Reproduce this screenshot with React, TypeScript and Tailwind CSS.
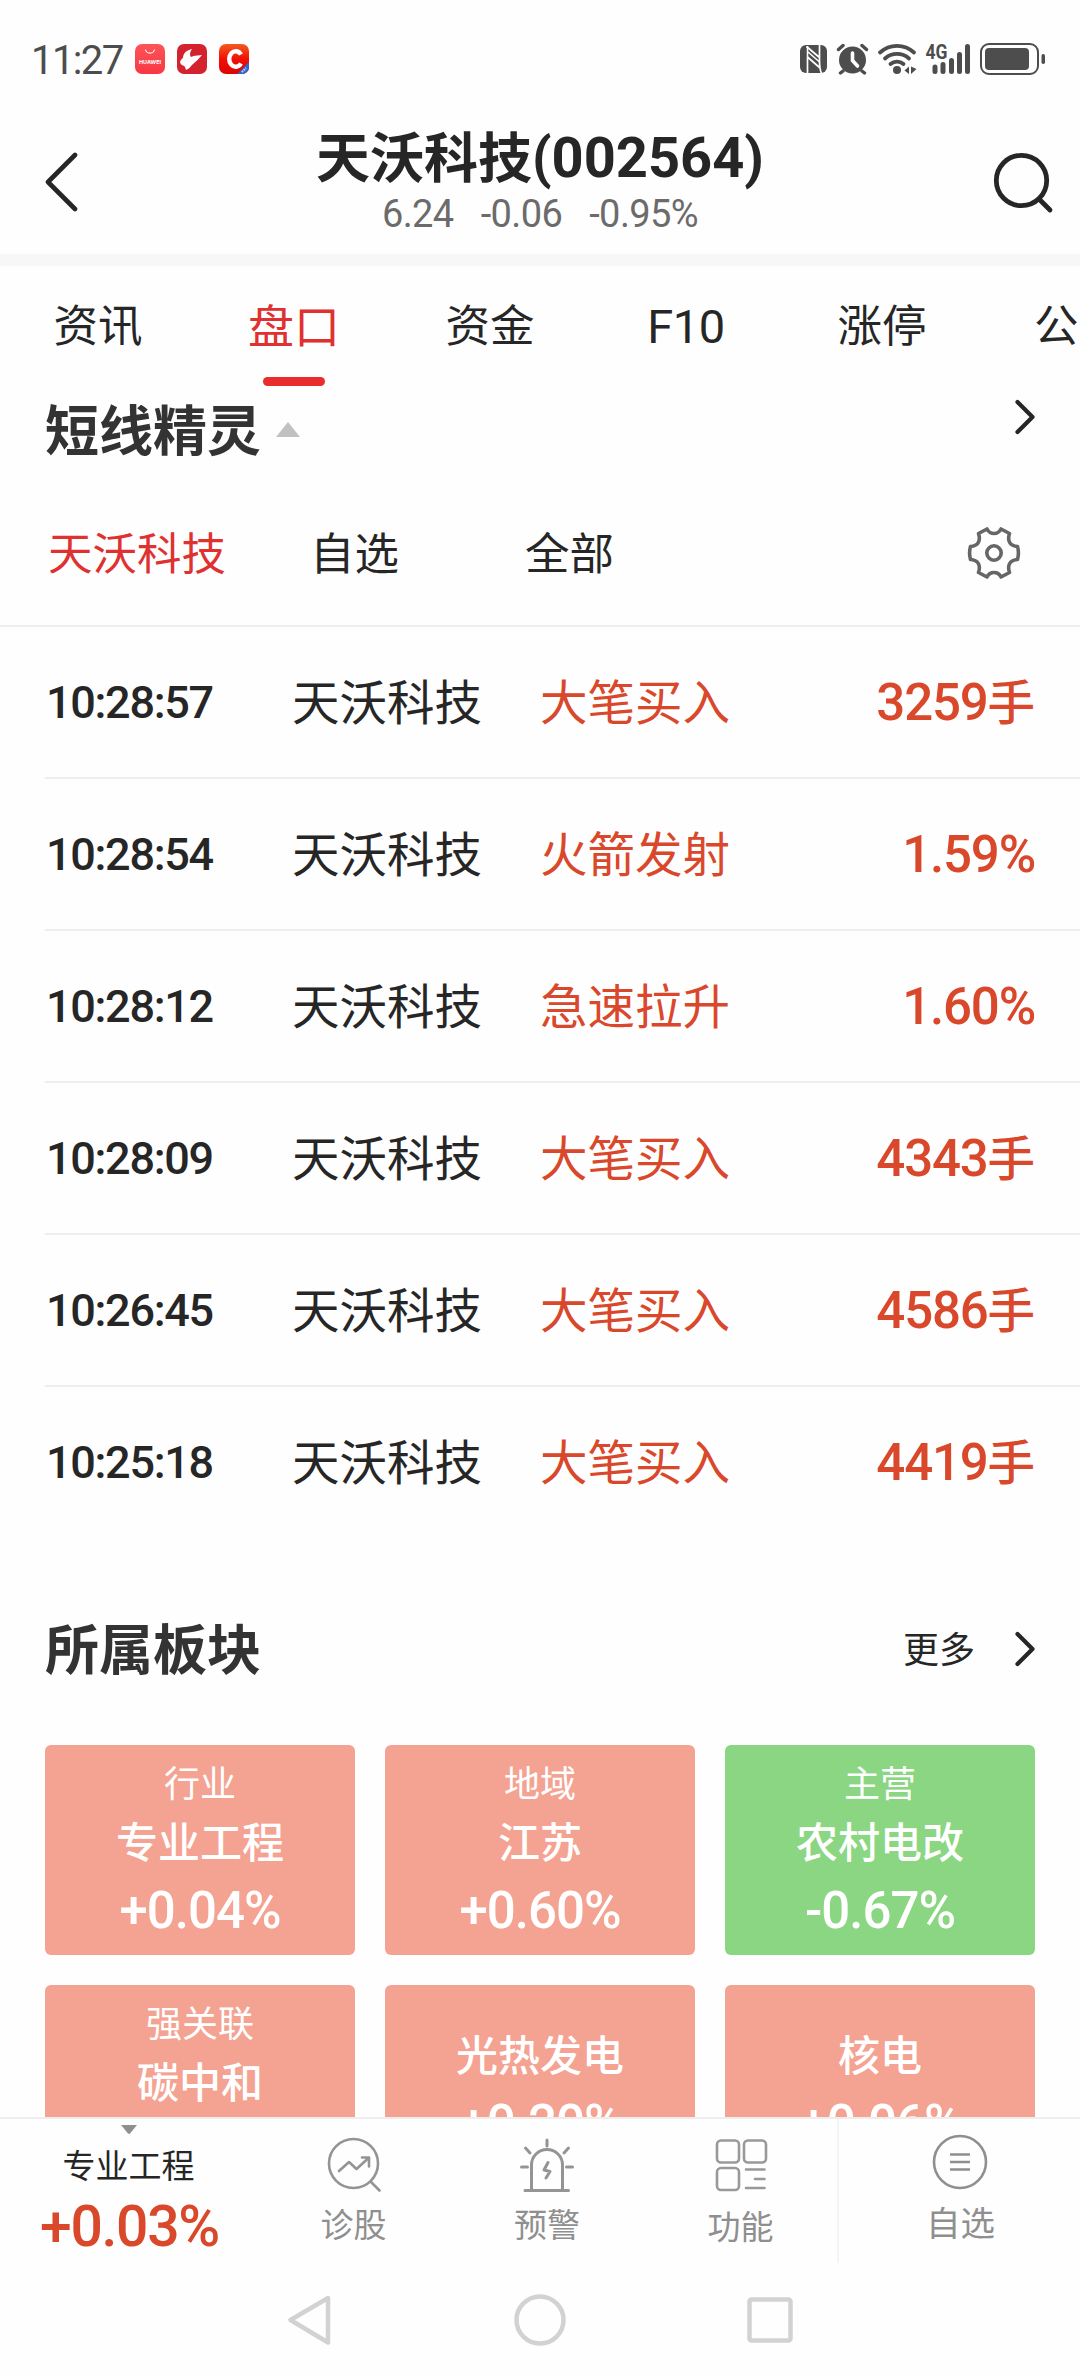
import React from 'react'
import clsx from 'clsx'

const tabs = ['资讯', '盘口', '资金', 'F10', '涨停']

const alerts = [
  { time: '10:28:57', name: '天沃科技', type: '大笔买入', value: '3259', unit: '手' },
  { time: '10:28:54', name: '天沃科技', type: '火箭发射', value: '1.59%' },
  { time: '10:28:12', name: '天沃科技', type: '急速拉升', value: '1.60%' },
  { time: '10:28:09', name: '天沃科技', type: '大笔买入', value: '4343', unit: '手' },
  { time: '10:26:45', name: '天沃科技', type: '大笔买入', value: '4586', unit: '手' },
  { time: '10:25:18', name: '天沃科技', type: '大笔买入', value: '4419', unit: '手' }
]

const sectors = [
  { tag: '行业', name: '专业工程', change: '+0.04%' },
  { tag: '地域', name: '江苏', change: '+0.60%' },
  { tag: '主营', name: '农村电改', change: '-0.67%' },
  { tag: '强关联', name: '碳中和', change: '' },
  { name: '光热发电', change: '+0.20%' },
  { name: '核电', change: '+0.06%' }
]

const StatusBar: React.FC = () => (
  <div className="flex h-[118px] shrink-0 items-center pl-[31px] pr-[35px] text-[#4d4d4d]">
    <span className="mt-[3px] w-[104px] font-[Roboto] text-[40px] leading-[48px] tracking-[-1.6px]">11:27</span>
    <svg className="h-[30px] w-[114px]" viewBox="0 0 114 30">
      <defs>
        <linearGradient id="store" x1="0" y1="0" x2="0" y2="1">
          <stop offset="0" stopColor="#fb5558" />
          <stop offset="1" stopColor="#fa3744" />
        </linearGradient>
        <linearGradient id="news" x1="0" y1="0" x2="0" y2="1">
          <stop offset="0" stopColor="#f65a1e" />
          <stop offset="0.5" stopColor="#f01005" />
          <stop offset="1" stopColor="#dc0404" />
        </linearGradient>
        <clipPath id="newsClip">
          <rect x="84" width="30" height="30" rx="7" />
        </clipPath>
      </defs>
      <rect width="30" height="30" rx="7" fill="url(#store)" />
      <path d="M10.5 5.5a4.6 4.6 0 0 0 9 0" fill="none" stroke="#fff" strokeWidth="1.1" />
      <text x="4" y="19.5" fill="#fff" fontSize="5.4" fontWeight="700" fontFamily="Inter, sans-serif" textLength="22" lengthAdjust="spacingAndGlyphs">HUAWEI</text>
      <rect x="42" width="30" height="30" rx="7" fill="#d3232f" />
      <path d="M57 5c-2 3-2.500 5-1.500 7.500 1 .5 1.500.5 2.500-.5l9-1c-3 4-7 7-10 10-2 2-3 4-6 5-1-3-1-4-4-5-3-2-2-5 1-7 0-5 4-8 9-9z" fill="#fff" />
      <g clipPath="url(#newsClip)">
        <rect x="84" width="30" height="30" fill="url(#news)" />
        <path d="M114 18v12h-12z" fill="#2f66cf" />
        <path d="M107 28l4-4" stroke="#cfdcf6" strokeWidth="2" strokeDasharray="1.5 1" />
      </g>
      <path d="M106 10.500A6.500 7.800 0 1 0 106 19.500" fill="none" stroke="#fff" strokeWidth="4.400" />
    </svg>
    <svg className="ml-auto h-[32px] w-[245px]" viewBox="800 43 245 32">
      {/* nfc */}
      <rect x="800" y="45" width="27" height="28" rx="6" fill="#4d4d4d" />
      <path d="M807.500 73.500V57M806.500 46.500L819.500 57.500M819.500 44.500V61M807.500 57L819.500 67.500M819.500 60.500Q819.500 69 821.500 73.500" fill="none" stroke="#fefefe" strokeWidth="1.700" />
      <path d="M807.500 51.500L819.500 62M807.500 46v11" fill="none" stroke="#fefefe" strokeWidth="1.500" />
      {/* alarm */}
      <circle cx="852.500" cy="60" r="13.500" fill="#4d4d4d" />
      <path d="M838.500 49.500l4.500-4M866.500 49.500l-4.500-4M843 71l-2.500 2M862 71l2.500 2" stroke="#4d4d4d" strokeWidth="3.400" strokeLinecap="round" />
      <path d="M852.500 53v7.500l5 5.500" fill="none" stroke="#fff" strokeWidth="3.600" strokeLinecap="round" />
      {/* wifi */}
      <g fill="none" stroke="#4d4d4d" strokeWidth="3.800" strokeLinecap="round">
        <path d="M880 52.500a25 25 0 0 1 34 0" />
        <path d="M885 58.500a18 18 0 0 1 24 0" />
        <path d="M890.500 64a10 10 0 0 1 13 0" />
      </g>
      <circle cx="897" cy="70" r="4" fill="#4d4d4d" />
      <path d="M904.500 70.500l4.500-4v7.500zM911 66.500v7.500l5.500-5z" fill="#4d4d4d" />
      {/* signal */}
      <text x="925.500" y="58.500" fill="#4d4d4d" fontSize="19.500" fontWeight="700" fontFamily="Roboto, sans-serif" textLength="22" lengthAdjust="spacingAndGlyphs">4G</text>
      <g stroke="#4d4d4d" strokeWidth="5" strokeLinecap="round">
        <path d="M935 67v4.500M943 64.500v7M951.500 60.500v11M959.500 54.500v17M967.500 46.500v25" />
      </g>
      {/* battery */}
      <rect x="981" y="44" width="57" height="30" rx="8" fill="none" stroke="#4d4d4d" strokeWidth="2" />
      <rect x="985" y="48" width="44" height="22" rx="4" fill="#4d4d4d" />
      <rect x="1041.500" y="54" width="3.500" height="10" rx="1.700" fill="#4d4d4d" />
    </svg>
  </div>
)

const Header: React.FC = () => (
  <div className="flex h-[136px] shrink-0 justify-between pl-[45px] pr-[26px]">
    <svg className="mr-[9px] mt-[34px] h-[60px] w-[34px]" viewBox="0 0 34 60" fill="none" stroke="#262626" strokeWidth="4.600" strokeLinecap="round" strokeLinejoin="round">
      <path d="M30 3L3 30l27 27" />
    </svg>
    <div className="flex flex-col items-center text-[#262626]">
      <h1 className="mt-[7px] flex h-[60px] items-center whitespace-nowrap text-[54px] font-bold leading-[60px]">
        天沃科技
        <span className="mt-[5px] font-[Roboto] text-[56px]">(002564)</span>
      </h1>
      <div className="mt-[9px] flex gap-[27px] font-[Roboto] text-[38px] leading-[40px] tracking-[-0.6px] text-[#6b6b6b]">
        <span>6.24</span>
        <span>-0.06</span>
        <span>-0.95%</span>
      </div>
    </div>
    <svg className="mt-[34px] h-[62px] w-[62px]" viewBox="0 0 62 62" fill="none" stroke="#262626" strokeWidth="4.800" strokeLinecap="round">
      <circle cx="29.500" cy="28.500" r="25.200" />
      <path d="M48 48l10 10" />
    </svg>
  </div>
)

const Chevron: React.FC<{ className?: string }> = ({ className }) => (
  <svg className={clsx('h-[36px] w-[22px]', className)} viewBox="0 0 22 36" fill="none" stroke="#262626" strokeWidth="4.200" strokeLinecap="round" strokeLinejoin="round">
    <path d="M3.500 3L18.500 18 3.500 33" />
  </svg>
)

const ShortTerm: React.FC = () => (
  <section className="shrink-0">
    <div className="flex h-[90px] items-center pl-[45px] pr-[44px]">
      <h2 className="mb-[6px] text-[54px] font-bold leading-[60px] text-[#333]">短线精灵</h2>
      <svg className="mb-[3px] ml-[15px] h-[15px] w-[24px]" viewBox="0 0 24 15">
        <path d="M12 0l12 15H0z" fill="#c1c1c1" />
      </svg>
      <Chevron className="mb-[28px] ml-auto" />
    </div>
    <div className="flex h-[151px] items-center border-b-2 border-[#eee] pl-[48px] text-[44.5px] leading-[50px] text-[#262626]">
      <span className="w-[262px] text-[#e03131]">天沃科技</span>
      <span className="w-[215px]">自选</span>
      <span>全部</span>
      <svg className="ml-auto mr-[59px] mt-[5px] h-[54px] w-[54px]" viewBox="-27 -27 54 54" fill="none" stroke="#666" strokeWidth="3.600" strokeLinejoin="round">
        <path d="M-7-24C-4-18 4-18 7-24L15.500-19.500C13-12 16-7 23.500-6.500C24.500-3 24.500 3 23.500 6.500C16 7 13 12 15.500 19.500L7 24C4 18-4 18-7 24L-15.500 19.500C-13 12-16 7-23.500 6.500C-24.500 3-24.500-3-23.500-6.500C-16-7-13-12-15.500-19.500Z" />
        <circle r="7.200" />
      </svg>
    </div>
    <div className="pl-[45px]">
      {alerts.map((item, i) => (
        <div
          key={item.time}
          className={clsx(
            'flex h-[152px] items-center border-b-2 pb-[5px] pr-[45px] text-[47.5px] leading-[56px] text-[#262626]',
            i < alerts.length - 1 ? 'border-[#eee]' : 'border-transparent'
          )}
        >
          <span className="mt-[7px] w-[247px] pl-px font-[Roboto] text-[45px] font-medium tracking-[-1.3px]">{item.time}</span>
          <span className="w-[248px]">{item.name}</span>
          <span className="text-[#d9482b]">{item.type}</span>
          <span className="ml-auto flex items-center font-medium text-[#d9482b]">
            <span className="mt-[6px] font-[Roboto] text-[51px] tracking-[-1.2px]">{item.value}</span>
            {item.unit}
          </span>
        </div>
      ))}
    </div>
  </section>
)

const Sectors: React.FC = () => (
  <section className="min-h-0 flex-1 overflow-hidden px-[45px]">
    <div className="flex h-[206px] items-center pt-[10px]">
      <h2 className="text-[54px] font-bold leading-[60px] text-[#333]">所属板块</h2>
      <span className="ml-auto text-[36px] leading-[40px] text-[#262626]">更多</span>
      <Chevron className="-mr-px ml-[39px] mt-[3px]" />
    </div>
    <div className="grid grid-cols-3 gap-[30px]">
      {sectors.map((item) => (
        <div
          key={item.name}
          className={clsx(
            'flex h-[210px] flex-col items-center justify-center rounded-[6px] text-white',
            item.change.startsWith('-') ? 'bg-[#8ad683]' : 'bg-[#f4a393]'
          )}
        >
          {item.tag && <div className="-mt-[2px] mb-[17px] text-[36px] leading-[36px]">{item.tag}</div>}
          <div className={clsx('mb-[22px] text-[42px] font-medium leading-[48px]', !item.tag && '-mt-[3px]')}>{item.name}</div>
          <div className="h-[50px] font-[Roboto] text-[51px] font-medium leading-[50px] tracking-[-1px]">{item.change}</div>
        </div>
      ))}
    </div>
  </section>
)

const BottomBar: React.FC = () => (
  <nav className="flex h-[146px] shrink-0 border-t-2 border-[#eee] text-[33px] leading-[36px] text-[#8f8f8f]">
    <div className="flex w-[257px] flex-col items-center pt-[6px]">
      <svg className="h-[9px] w-[16px]" viewBox="0 0 16 9">
        <path d="M0 0h16L9 8.500q-1 .8-2 0z" fill="#8f8f8f" />
      </svg>
      <span className="mt-[12px] text-[#262626]">专业工程</span>
      <span className="mt-[17px] pl-[2px] font-[Roboto] text-[57px] font-medium leading-[56px] tracking-[-1.3px] text-[#d9482b]">+0.03%</span>
    </div>
    <div className="flex w-[193px] flex-col items-center pt-[18px]">
      <svg className="h-[56px] w-[56px]" viewBox="0 0 56 56" fill="none" stroke="#949494" strokeWidth="2.600" strokeLinecap="round" strokeLinejoin="round">
        <circle cx="27.500" cy="26.500" r="24.500" />
        <path d="M45 45l8.500 8.500M13 34l10-9 7.500 7 12-11M36 20.500h7v9" />
      </svg>
      <span className="mt-[12px]">诊股</span>
    </div>
    <div className="flex w-[194px] flex-col items-center pt-[18px]">
      <svg className="h-[56px] w-[56px]" viewBox="0 0 56 56" fill="none" stroke="#949494" strokeWidth="3" strokeLinecap="round" strokeLinejoin="round">
        <path d="M12.500 53.500V28a15.500 15.500 0 0 1 31 0v25.500M6 53.500h43.500M28 3v6M6.500 11l4.500 5M49.500 11l-4.500 5M2.500 30h6M47.500 30h6M29 25.500l-4 7.500 6 1.500-4 6.500" />
      </svg>
      <span className="mt-[12px]">预警</span>
    </div>
    <div className="flex w-[193px] flex-col items-center pt-[18px]">
      <svg className="h-[56px] w-[56px]" viewBox="0 0 56 56" fill="none" stroke="#999" strokeWidth="2.600" strokeLinecap="round">
        <rect x="4" y="3.500" width="22" height="22" rx="4" />
        <rect x="31" y="3.500" width="22" height="22" rx="4" />
        <rect x="4" y="31" width="22" height="22" rx="4" />
        <path d="M33 32.500h18.500M42 42h9.500M33 51h18.500" />
      </svg>
      <span className="mt-[14px]">功能</span>
    </div>
    <div className="flex flex-1 flex-col items-center border-l-2 border-[#f5f5f5] pt-[15px]">
      <svg className="h-[56px] w-[56px]" viewBox="0 0 56 56" fill="none" stroke="#8f8f8f" strokeWidth="2.600">
        <circle cx="28" cy="28" r="26" />
        <path d="M18 20.500h20M18 28h20M18 35.500h20" />
      </svg>
      <span className="mt-[13px] pl-[2px] text-[34.5px]">自选</span>
    </div>
  </nav>
)

const SystemNav: React.FC = () => (
  <div className="flex h-[113px] shrink-0 items-center justify-center gap-[181px] text-[#d2d2d2]">
    <svg className="h-[52px] w-[48px]" viewBox="0 0 48 52" fill="none" stroke="currentColor" strokeWidth="4.500" strokeLinejoin="round">
      <path d="M43 4L5.500 26 43 48.500z" />
    </svg>
    <svg className="h-[52px] w-[52px]" viewBox="0 0 52 52" fill="none" stroke="currentColor" strokeWidth="4.500">
      <circle cx="26" cy="26" r="23.500" />
    </svg>
    <svg className="h-[52px] w-[48px]" viewBox="0 0 48 52" fill="none" stroke="currentColor" strokeWidth="4.500">
      <rect x="2.500" y="5.500" width="41" height="41" rx="2" />
    </svg>
  </div>
)

export default function App() {
  return (
    <div className="flex h-[2376px] w-[1080px] flex-col overflow-hidden bg-[#fefefe] font-['Noto_Sans_CJK_SC',sans-serif]">
      <StatusBar />
      <Header />
      <div className="h-[12px] shrink-0 bg-[#f7f7f7]" />
      <div className="flex h-[120px] shrink-0 overflow-hidden text-[44.5px] text-[#262626]">
        {tabs.map((tab) => (
          <div key={tab} className={clsx('flex w-[196px] shrink-0 flex-col items-center', tab === '盘口' && 'text-[46px] text-[#e03131]')}>
            <span className={clsx('flex h-[111px] items-center', tab === 'F10' ? 'pt-[12px] font-[Roboto] text-[47px] tracking-[-0.5px]' : 'pt-[4px]')}>
              {tab}
            </span>
            {tab === '盘口' && <span className="h-[9px] w-[62px] rounded-full bg-[#e92d2d]" />}
          </div>
        ))}
        <span className="flex h-[111px] items-center pl-[54px] pt-[4px]">公</span>
      </div>
      <ShortTerm />
      <Sectors />
      <BottomBar />
      <SystemNav />
    </div>
  )
}
